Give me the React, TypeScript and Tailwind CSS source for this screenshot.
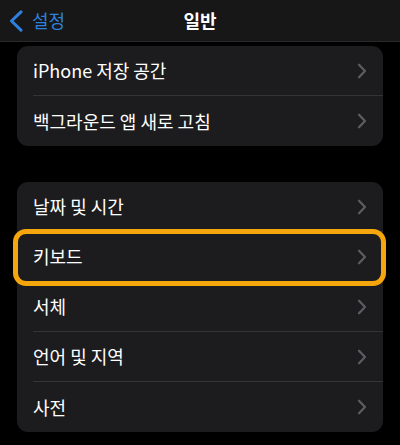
type RowProps = {
    label: string
    last?: boolean
    highlight?: boolean
}

const Chevron = () => (
    <svg width="10" height="16" viewBox="0 0 10 16" fill="none">
        <polyline points="2,1.8 8,8 2,14.2" stroke="#5c5c60" strokeWidth="2.3" strokeLinecap="round" strokeLinejoin="round" />
    </svg>
)

const Row = ({ label, last, highlight }: RowProps) => {
    return (
        <div className="relative flex h-[50px] items-stretch pl-4">
            <div className={`flex flex-1 items-center justify-between pr-[16px] ${last ? "" : "border-b border-[#343437]"}`}>
                <span className="text-[18px] text-white">{label}</span>
                <Chevron />
            </div>
            {highlight && (
                <div className="absolute -left-[4px] -right-[3px] -top-[3px] -bottom-[4px] rounded-[13px] border-[5px] border-[#f6a60d]" />
            )}
        </div>
    )
}

const App = () => {
    return (
        <div className="h-[445px] w-[400px] overflow-hidden bg-black" style={{ fontFamily: '"Noto Sans CJK KR", "Noto Sans", sans-serif' }}>
            {/* nav bar */}
            <div className="relative flex h-[42px] items-center border-b border-[#2a2a2c] bg-[#171717]">
                <div className="flex items-center pl-[9px] text-[#2f80de]">
                    <svg width="14" height="22" viewBox="0 0 14 22" fill="none">
                        <polyline points="12,1.8 2.5,11 12,20.2" stroke="currentColor" strokeWidth="3" strokeLinecap="round" strokeLinejoin="round" />
                    </svg>
                    <span className="ml-[9px] text-[18px]">설정</span>
                </div>
                <h1 className="absolute left-1/2 -translate-x-1/2 text-[18px] font-semibold text-white">일반</h1>
            </div>

            <div className="flex flex-col gap-[36px] px-[17px] pt-[4px]">
                <section className="overflow-hidden rounded-[11px] bg-[#1c1c1e]">
                    <Row label="iPhone 저장 공간" />
                    <Row label="백그라운드 앱 새로 고침" last />
                </section>

                <section className="rounded-[11px] bg-[#1c1c1e]">
                    <Row label="날짜 및 시간" />
                    <Row label="키보드" highlight />
                    <Row label="서체" />
                    <Row label="언어 및 지역" />
                    <Row label="사전" last />
                </section>
            </div>
        </div>
    )
}

export default App;
